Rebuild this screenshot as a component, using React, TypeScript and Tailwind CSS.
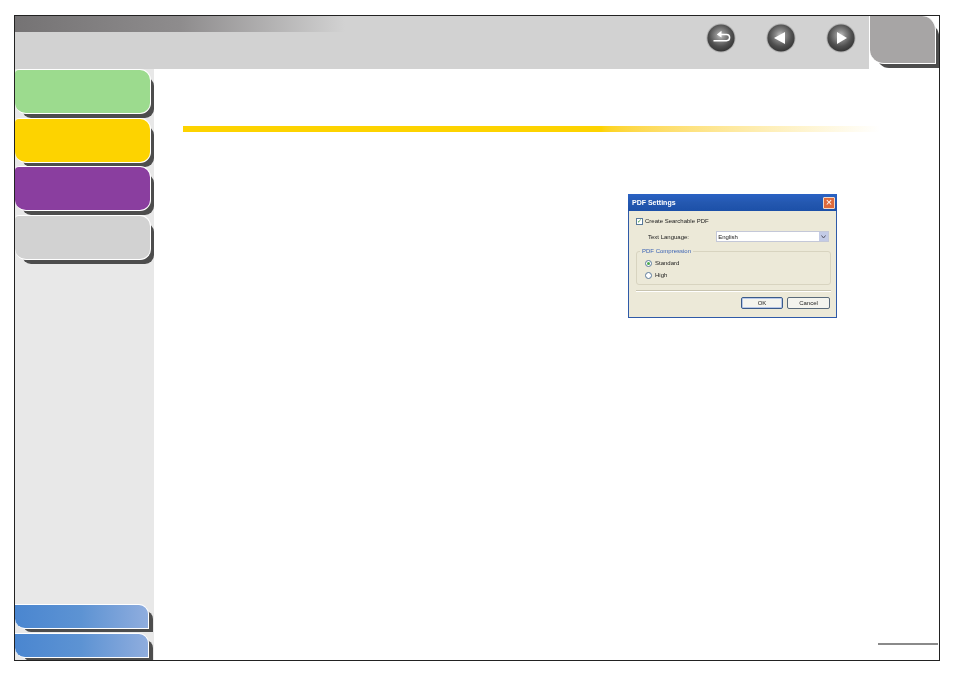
const NavButton = ({ id, children }: { id: string; children: React.ReactNode }) => {
  return (
    <svg width="30" height="30" viewBox="0 0 30 30">
      <defs>
        <radialGradient id={id} cx="48%" cy="40%" r="58%">
          <stop offset="0%" stopColor="#c4c4c4" />
          <stop offset="30%" stopColor="#8a8a8a" />
          <stop offset="70%" stopColor="#505050" />
          <stop offset="100%" stopColor="#383838" />
        </radialGradient>
      </defs>
      <circle cx="15" cy="15" r="14.6" fill="#8c8c8c" opacity="0.45" />
      <circle cx="15" cy="15" r="13.6" fill={`url(#${id})`} />
      {children}
    </svg>
  );
};

const SideTab = ({ color }: { color: string }) => {
  return (
    <div
      className={`h-[45px] w-[136px] rounded-tr-[11px] rounded-b-[11px] rounded-tl-[4px] border border-l-0 border-white shadow-[5px_6px_0_-2px_#4d4d4d] ${color}`}
    />
  );
};

const BottomTab = () => {
  return (
    <div className="h-[25px] w-[134px] rounded-tr-[10px] rounded-bl-[10px] border border-l-0 border-white bg-linear-to-r from-[#4a86d0] via-[#5d93d3] to-[#8fadde] shadow-[6px_5px_0_-2px_#4d4d4d]" />
  );
};

const Radio = ({ checked, label }: { checked?: boolean; label: string }) => {
  return (
    <div className="flex h-[8px] items-center gap-[3px]">
      <span className="flex size-[7px] items-center justify-center rounded-full border border-[#5a7a9a] bg-white">
        {checked && <span className="size-[3px] rounded-full bg-[#4aa84a]" />}
      </span>
      <span>{label}</span>
    </div>
  );
};

const PdfDialog = () => {
  return (
    <div className="ml-[474px] mt-[62px] flex h-[124px] w-[209px] flex-col border-x border-b border-[#2f5aa8] bg-[#ece9d8] font-['Liberation_Sans',sans-serif] text-[6px] leading-[8px] text-[#222] blur-[0.4px]">
      <div className="-mx-px flex h-[17px] shrink-0 items-center justify-between bg-linear-to-b from-[#2a62c4] via-[#2458b0] to-[#1c50a8] pl-[4px] pr-[2px] text-[7px] font-bold text-white">
        <span>PDF Settings</span>
        <span className="flex size-[12px] items-center justify-center rounded-[1px] border border-[#f0d8c8] bg-[#de6a3c] text-[11px] font-normal leading-none text-white">
          ×
        </span>
      </div>
      <div className="flex flex-1 flex-col px-[7px] pt-[6px]">
        <div className="flex h-[8px] items-center gap-[2px]">
          <span className="flex size-[7px] items-center justify-center border border-[#5a7a9a] bg-white text-[6px] leading-none text-[#3c9a3c]">
            ✓
          </span>
          <span>Create Searchable PDF</span>
        </div>
        <div className="mt-[6px] flex items-center">
          <span className="ml-[12px] w-[69px]">Text Language:</span>
          <div className="flex h-[11px] w-[114px] items-center justify-between border border-[#c4c8d8] bg-white pl-[1px]">
            <span>English</span>
            <span className="flex h-full w-[9px] items-center justify-center bg-[#c3cbe6]">
              <svg width="5" height="4" viewBox="0 0 5 4">
                <path d="M0.5 0.5 L2.5 3 L4.5 0.5" fill="none" stroke="#556" strokeWidth="1" />
              </svg>
            </span>
          </div>
        </div>
        <fieldset className="mt-[5px] h-[38px] w-[195px] rounded-[3px] border border-[#d8d4c0] px-[8px]">
          <legend className="ml-[-5px] px-[2px] text-[#3a62b4]">PDF Compression</legend>
          <div className="mt-[4px] flex flex-col gap-[4px]">
            <Radio checked label="Standard" />
            <Radio label="High" />
          </div>
        </fieldset>
        <div className="mt-[5px] h-[2px] w-[195px] border-t border-[#c8c4b0] bg-white" />
        <div className="mt-[5px] flex w-[194px] justify-end gap-[4px]">
          <button className="h-[12px] w-[42px] rounded-[2px] border border-[#3a5a8a] bg-[#f4f4ee] leading-[10px] shadow-[inset_0_0_0_1px_#b8c8e8]">
            OK
          </button>
          <button className="h-[12px] w-[43px] rounded-[2px] border border-[#5a6a7a] bg-[#f4f4ee] leading-[10px]">
            Cancel
          </button>
        </div>
      </div>
    </div>
  );
};

export default function App() {
  return (
    <div className="h-[674px] w-[954px] bg-white pl-[14px] pt-[15px]">
      <div className="flex h-[646px] w-[926px] flex-col overflow-hidden border border-[#222]">
        <header className="flex h-[53px] shrink-0">
          <div className="flex flex-1 flex-col bg-[#d2d2d2]">
            <div className="h-[16px] w-[330px] bg-linear-to-r from-[#757374] via-[#8e8c8d] to-[#d2d2d2]" />
            <div className="mr-[13px] mt-[-9px] flex justify-end gap-[30px]">
              <NavButton id="nav-return">
                <path
                  d="M7.5 17.7 H20.5 A3.1 3.1 0 0 0 20.5 11.5 H14"
                  fill="none"
                  stroke="#fff"
                  strokeWidth="1.5"
                />
                <path d="M15.5 7.8 L10.8 11.5 L15.5 14.4 Z" fill="#fff" />
              </NavButton>
              <NavButton id="nav-back">
                <path d="M19 9 V21 L8 15 Z" fill="#fff" />
              </NavButton>
              <NavButton id="nav-next">
                <path d="M11 9 V21 L21 15 Z" fill="#fff" />
              </NavButton>
            </div>
          </div>
          <div className="w-[70px] pl-[1px]">
            <div className="h-[48px] w-[66px] rounded-tr-[14px] rounded-bl-[14px] border-r border-b border-white bg-[#a7a5a5] shadow-[5px_6px_0_-2px_#4d4d4d]" />
          </div>
        </header>
        <div className="flex min-h-0 flex-1">
          <aside className="flex w-[139px] shrink-0 flex-col bg-[#e8e8e8]">
            <div className="flex flex-col gap-[3.7px]">
              <SideTab color="bg-[#9cdb8e]" />
              <SideTab color="bg-[#fdd300]" />
              <SideTab color="bg-[#8a3e9f]" />
              <SideTab color="bg-[#d2d2d2]" />
            </div>
            <div className="mb-[2px] mt-auto flex flex-col gap-[4px]">
              <BottomTab />
              <BottomTab />
            </div>
          </aside>
          <main className="flex flex-1 flex-col">
            <div className="ml-[29px] mt-[57px] h-[6px] w-[697px] bg-linear-to-r from-[#fdd300] from-60% to-white" />
            <PdfDialog />
            <div className="mb-[15px] mr-px mt-auto h-[2px] w-[60px] self-end bg-[#8a8a8a]" />
          </main>
        </div>
      </div>
    </div>
  );
}
